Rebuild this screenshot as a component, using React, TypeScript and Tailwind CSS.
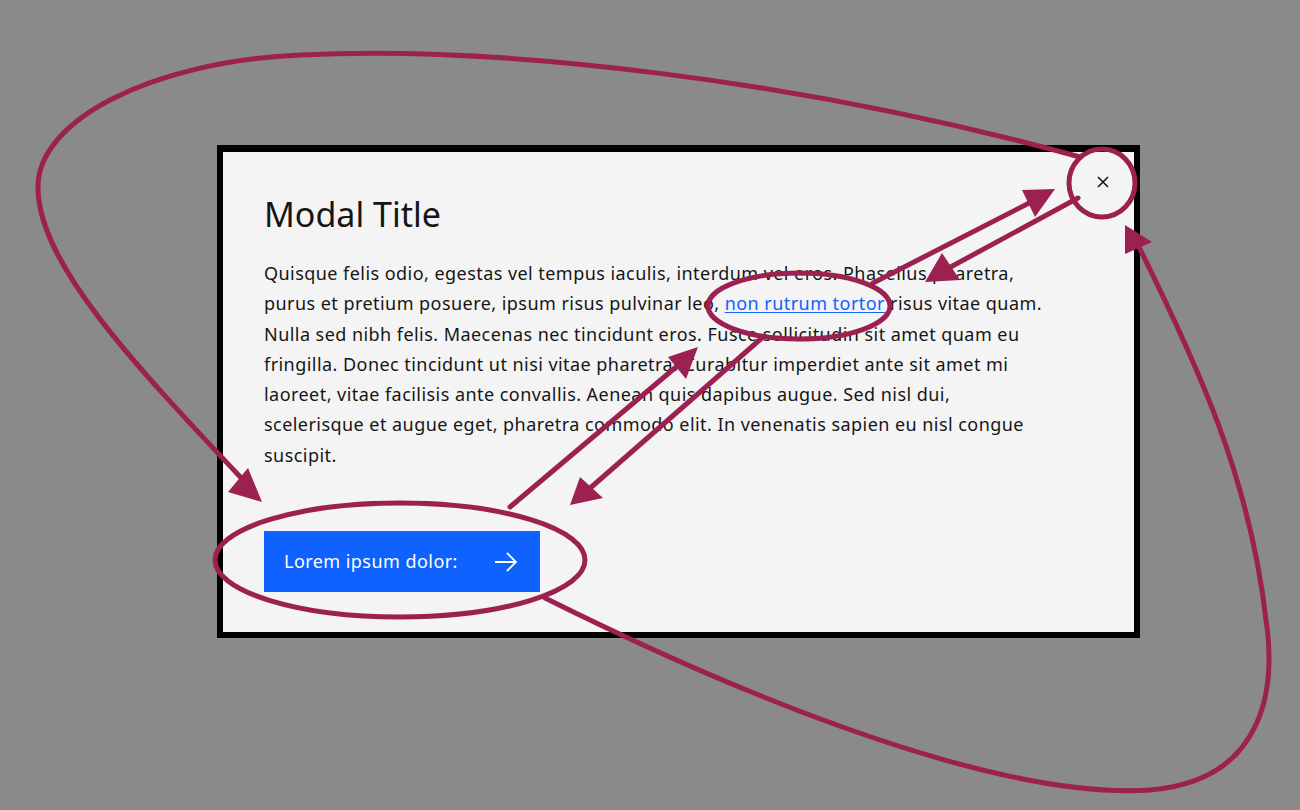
import React from "react";

const M = "#9c2150";

function Annotations() {
  return (
    <svg
      className="pointer-events-none absolute left-0 top-0"
      width={1300}
      height={810}
      viewBox="0 0 1300 810"
      fill="none"
    >
      <g stroke={M} strokeWidth={5} strokeLinecap="round" fill="none">
        <path d="M 1080 157 C 800 80, 500 45, 300 55 C 150 62, 40 120, 38 185 C 36 260, 130 360, 245 482" />
        <path d="M 545 598 C 750 700, 1000 800, 1150 790 C 1270 780, 1275 680, 1266 620 C 1250 480, 1200 370, 1138 245" />
        <ellipse cx={1102} cy={183} rx={33} ry={34} />
        <ellipse cx={799} cy={306} rx={91} ry={33} />
        <ellipse cx={400} cy={560} rx={185} ry={57} />
        <path d="M 873 283 L 1035 200" />
        <path d="M 1078 198 L 945 270" />
        <path d="M 510 507 L 682 362" />
        <path d="M 763 337 L 588 490" />
      </g>
      <g fill={M}>
        <polygon points="262,502 228,492 248,468" />
        <polygon points="1125,225 1125,254 1152,242" />
        <polygon points="1055,189 1022,190 1035,217" />
        <polygon points="925,282 942,253 960,280" />
        <polygon points="698,347 668,357 686,379" />
        <polygon points="570,505 580,477 603,498" />
      </g>
    </svg>
  );
}

export default function App() {
  const font = { fontFamily: '"Noto Sans", "Open Sans", Arial, sans-serif' };
  return (
    <div
      className="relative h-[810px] w-[1300px] overflow-hidden bg-[#8a8a8a] pl-[217px] pt-[145px]"
      style={font}
    >
      <div className="relative h-[493px] w-[923px] border-[6px] border-t-[7px] border-black bg-[#f4f4f4]">
        <button className="absolute right-0 top-0 flex h-[60px] w-[62px] items-center justify-center">
          <svg width="14" height="14" viewBox="0 0 14 14">
            <path d="M2 2 L12 12 M12 2 L2 12" stroke="#161616" strokeWidth="1.6" />
          </svg>
        </button>
        <div className="flex flex-col pl-[41px] pt-[40px]">
          <h2 className="text-[34px] font-normal leading-[44px] text-[#161616]">Modal Title</h2>
          <p className="mt-[22px] whitespace-nowrap text-[18px] leading-[30.3px] tracking-[0.45px] text-[#161616]">
            Quisque felis odio, egestas vel tempus iaculis, interdum vel eros. Phasellus pharetra,
            <br />
            purus et pretium posuere, ipsum risus pulvinar leo,{" "}
            <a href="#" className="text-[#0f62fe] underline underline-offset-2">
              non rutrum tortor
            </a>{" "}
            risus vitae quam.
            <br />
            Nulla sed nibh felis. Maecenas nec tincidunt eros. Fusce sollicitudin sit amet quam eu
            <br />
            fringilla. Donec tincidunt ut nisi vitae pharetra. Curabitur imperdiet ante sit amet mi
            <br />
            laoreet, vitae facilisis ante convallis. Aenean quis dapibus augue. Sed nisl dui,
            <br />
            scelerisque et augue eget, pharetra commodo elit. In venenatis sapien eu nisl congue
            <br />
            suscipit.
          </p>
          <div className="mt-[61px]">
            <button className="flex h-[61px] w-[276px] items-center justify-between bg-[#0f62fe] pl-[20px] pr-[22px] text-[18px] tracking-[0.45px] text-white">
              <span>Lorem ipsum dolor:</span>
              <svg width="24" height="22" viewBox="0 0 24 22">
                <path d="M1 11 H22 M13 2 L22 11 L13 20" stroke="white" strokeWidth="1.8" fill="none" />
              </svg>
            </button>
          </div>
        </div>
      </div>
      <Annotations />
    </div>
  );
}
